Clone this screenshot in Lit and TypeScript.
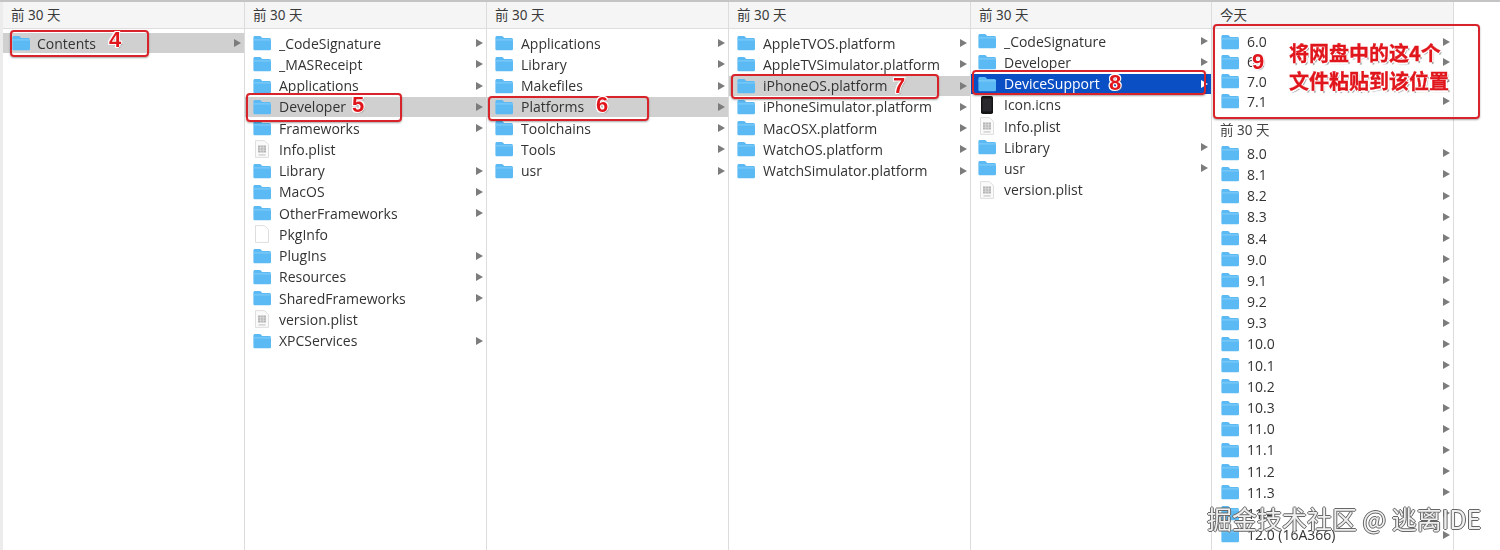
import { LitElement, html, css, svg } from "lit";
import { customElement } from "lit/decorators.js";

type Kind = "f" | "p" | "d" | "i";
type Item = { n: string; k?: Kind; s?: "g" | "b" };

const folder = svg`<svg class="ic" viewBox="0 0 18 16"><path fill="#5bb9f4" d="M.4 2.600C.4 1.700 1.100 1 1.900 1h4.800c.6 0 .9.2 1.300.6L9.100 3h7.200c.9 0 1.700.7 1.700 1.600v9.100c0 .9-.8 1.600-1.700 1.600H1.900C1.100 15.300 .4 14.600 .4 13.700V2.600Z"/><path fill="#86cff9" d="M.4 4.400h17.600V5.400H.4Z"/></svg>`;
const plist = svg`<svg class="ic tall" viewBox="0 0 18 18"><path fill="#fafafa" stroke="#d8d8d8" stroke-width=".8" d="M2.500 .6H11.500l4 4V17.400H2.500Z"/><rect x="5" y="5.500" width="8" height="7" fill="#b4b4b4"/><path stroke="#e8e8e8" stroke-width=".6" d="M5 7.800h8M5 10.200h8M7.700 5.500v7M10.300 5.500v7"/><rect x="5.500" y="14.300" width="7" height="1.200" fill="#c8c8c8"/></svg>`;
const blank = svg`<svg class="ic tall" viewBox="0 0 18 18"><path fill="#fff" stroke="#d6d6d6" stroke-width=".8" d="M2.500 .6H11.500l4 4V17.400H2.500Z"/></svg>`;
const phone = svg`<svg class="ic tall" viewBox="0 0 18 18"><rect x="3" y="0" width="12" height="18" rx="1.800" fill="#141414"/><rect x="4.500" y="2.400" width="9" height="13" fill="#2a2a2e"/></svg>`;
const icons = { f: folder, p: plist, d: blank, i: phone };

const fs = (names: string, marks: Record<string, "g" | "b"> = {}): Item[] =>
  names.split(",").map((n) => {
    const [name, k] = n.split(":");
    return { n: name, k: (k as Kind) || "f", s: marks[name] };
  });

const col1 = fs("Contents", { Contents: "g" });
const col2 = fs(
  "_CodeSignature,_MASReceipt,Applications,Developer,Frameworks,Info.plist:p,Library,MacOS,OtherFrameworks,PkgInfo:d,PlugIns,Resources,SharedFrameworks,version.plist:p,XPCServices",
  { Developer: "g" }
);
const col3 = fs("Applications,Library,Makefiles,Platforms,Toolchains,Tools,usr", { Platforms: "g" });
const col4 = fs(
  "AppleTVOS.platform,AppleTVSimulator.platform,iPhoneOS.platform,iPhoneSimulator.platform,MacOSX.platform,WatchOS.platform,WatchSimulator.platform",
  { "iPhoneOS.platform": "g" }
);
const col5 = fs("_CodeSignature,Developer,DeviceSupport,Icon.icns:i,Info.plist:p,Library,usr,version.plist:p", {
  DeviceSupport: "b",
});
const today = fs("6.0,6.1,7.0,7.1");
const older = fs(
  "8.0,8.1,8.2,8.3,8.4,9.0,9.1,9.2,9.3,10.0,10.1,10.2,10.3,11.0,11.1,11.2,11.3,11.4,12.0 (16A366)"
);

@customElement("app-root")
export class AppRoot extends LitElement {
  static styles = css`
    :host {
      display: block;
      width: 1500px;
      height: 550px;
      overflow: hidden;
      background: #fff;
      font-family: "Open Sans", "Noto Sans CJK SC", sans-serif;
    }
    .page {
      position: relative;
      width: 1500px;
      height: 550px;
      border-top: 2px solid #c4c4c4;
      box-sizing: border-box;
      display: grid;
      grid-template-columns: 3px 242px 242px 242px 242px 241px 242px 1fr;
      filter: blur(0.35px);
    }
    .edge {
      background: #ececec;
    }
    .col {
      height: 548px;
      border-right: 1px solid #dcdcdc;
      box-sizing: border-box;
      overflow: hidden;
      color: #333;
      font-size: 14px;
    }
    .head {
      height: 27px;
      background: #f5f5f5;
      border-bottom: 1px solid #dedede;
      box-sizing: border-box;
      display: flex;
      align-items: center;
      padding: 0 0 2px 8px;
      font-size: 13.500px;
      font-family: "Noto Sans", "Noto Sans CJK SC", sans-serif;
      color: #3a3a3a;
      margin-bottom: 3.400px;
    }
    .sub {
      font-size: 13.500px;
      font-family: "Noto Sans", "Noto Sans CJK SC", sans-serif;
      color: #444;
      height: 20px;
      display: flex;
      align-items: center;
      padding-left: 8px;
      margin: 8px 0 3.500px;
    }
    .row {
      height: 21.250px;
      display: flex;
      align-items: center;
      padding: 0 3px 0 8px;
      gap: 8px;
      box-sizing: border-box;
    }
    .c5 .head {
      margin-bottom: 1.700px;
    }
    .c5 .row {
      height: 21.200px;
      padding-left: 7px;
    }
    .c6 .head {
      margin-bottom: 3px;
    }
    .c6 .row {
      height: 21.200px;
      padding-left: 9px;
    }
    .c6 .t .row {
      height: 19.800px;
    }
    .first .row {
      padding-left: 9px;
      gap: 7px;
    }
    .row.g {
      background: linear-gradient(#d0d0d0, #d0d0d0) center / 100% 20px no-repeat;
    }
    .row.b {
      background: linear-gradient(#0a4fc4, #0a4fc4) center / 100% 20px no-repeat;
      color: #fff;
    }
    .ic {
      width: 18px;
      height: 16px;
      flex: none;
    }
    .ic.tall {
      height: 18px;
    }
    .name {
      flex: 1;
      white-space: nowrap;
      overflow: hidden;
    }
    .arrow {
      flex: none;
      width: 0;
      height: 0;
      border-left: 7px solid #7c7c7c;
      border-top: 4.500px solid transparent;
      border-bottom: 4.500px solid transparent;
    }
    .b .arrow {
      border-left-color: #fff;
    }
    .box {
      position: absolute;
      border: 2.500px solid #d8232a;
      border-radius: 4px;
      box-sizing: border-box;
      box-shadow: 0 1px 2px rgba(0, 0, 0, 0.35);
    }
    .bx1 { left: 10px; top: 28px; width: 139px; height: 27px; }
    .bx2 { left: 246px; top: 91px; width: 156px; height: 29px; }
    .bx3 { left: 488px; top: 94px; width: 161px; height: 25px; }
    .bx4 { left: 731px; top: 72px; width: 208px; height: 25px; }
    .bx5 { left: 972px; top: 68px; width: 234px; height: 25px; }
    .bx6 { left: 1213px; top: 22px; width: 267px; height: 95px; }
    .mark {
      position: absolute;
      font: 700 22px/22px "Liberation Sans", sans-serif;
      color: #e0161c;
      text-shadow: 1px 0 0 #fff, -1px 0 0 #fff, 0 1px 0 #fff, 0 -1px 0 #fff, 1px 1px 1px #888, -1px 1px 0 #fff,
        1px -1px 0 #fff, -1px -1px 0 #fff;
    }
    .m4 { left: 109px; top: 27px; }
    .m5 { left: 352px; top: 92px; }
    .m6 { left: 596px; top: 92px; }
    .m7 { left: 893px; top: 73px; }
    .m8 { left: 1109px; top: 70px; }
    .m9 { left: 1252px; top: 49px; }
    .note {
      position: absolute;
      left: 1289px;
      top: 37px;
      font: 700 20px/28px "Noto Sans CJK SC", sans-serif;
      color: #e0161c;
      white-space: nowrap;
      -webkit-text-stroke: 0.3px #e0161c;
      text-shadow: 1.500px 0 0 #fff, -1.500px 0 0 #fff, 0 1.500px 0 #fff, 0 -1.500px 0 #fff, 1.500px 1.500px 1px #999,
        -1px 1px 0 #fff, 1px -1px 0 #fff, -1px -1px 0 #fff;
    }
    .wm {
      position: absolute;
      left: 1207px;
      top: 501px;
      font: 400 25px/30px "Noto Sans CJK SC", sans-serif;
      letter-spacing: 0;
      color: rgba(255, 255, 255, 0.9);
      white-space: nowrap;
      text-shadow: 1px 0 0 #666, -1px 0 0 #666, 0 1px 0 #666, 0 -1px 0 #666;
    }
  `;

  private row(it: Item) {
    const leaf = it.k === "p" || it.k === "d" || it.k === "i";
    return html`<div class="row ${it.s ?? ""}">
      ${icons[it.k ?? "f"]}<span class="name">${it.n}</span>${leaf ? "" : html`<span class="arrow"></span>`}
    </div>`;
  }

  private col(items: Item[], cls = "") {
    return html`<div class="col ${cls}">
      <div class="head">前 30 天</div>
      ${items.map((i) => this.row(i))}
    </div>`;
  }

  render() {
    return html`<div class="page">
      <div class="edge"></div>
      ${this.col(col1, "first")} ${this.col(col2)} ${this.col(col3)} ${this.col(col4)} ${this.col(col5, "c5")}
      <div class="col c6">
        <div class="head">今天</div>
        <div class="t">${today.map((i) => this.row(i))}</div>
        <div class="sub">前 30 天</div>
        ${older.map((i) => this.row(i))}
      </div>
      <div></div>

      <div class="box bx1"></div>
      <div class="box bx2"></div>
      <div class="box bx3"></div>
      <div class="box bx4"></div>
      <div class="box bx5"></div>
      <div class="box bx6"></div>
      <span class="mark m4">4</span>
      <span class="mark m5">5</span>
      <span class="mark m6">6</span>
      <span class="mark m7">7</span>
      <span class="mark m8">8</span>
      <span class="mark m9">9</span>
      <div class="note">将网盘中的这4个<br />文件粘贴到该位置</div>
      <div class="wm">掘金技术社区 @ 逃离IDE</div>
    </div>`;
  }
}
